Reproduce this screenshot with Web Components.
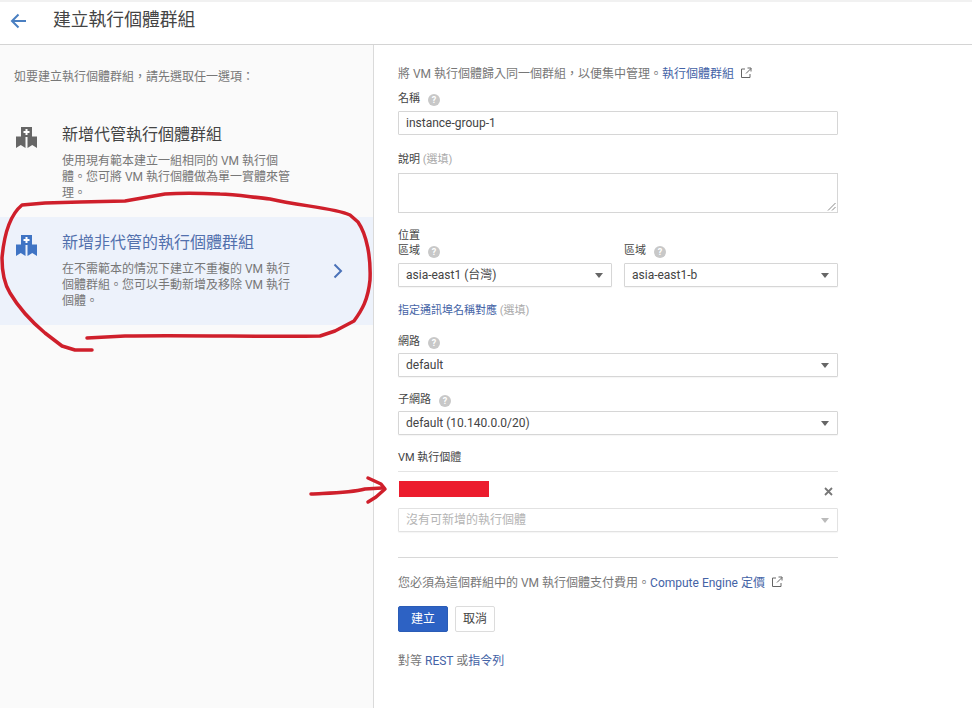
<!DOCTYPE html>
<html lang="zh-TW"><head><meta charset="utf-8"><title>建立執行個體群組</title>
<style>
html,body{margin:0;height:100%;background:#fff;overflow:hidden}
body{font:12px/16px Roboto,"Noto Sans CJK TC",sans-serif;color:#666}
</style></head><body>
<ig-page>
  <ig-header slot="header">建立執行個體群組</ig-header>
  <div slot="left" style="padding:24px 14px 24px;color:#777">如要建立執行個體群組，請先選取任一選項：</div>
  <ig-option slot="left" heading="新增代管執行個體群組">使用現有範本建立一組相同的 VM 執行個體。您可將 VM 執行個體做為單一實體來管理。</ig-option>
  <ig-option slot="left" heading="新增非代管的執行個體群組" selected>在不需範本的情況下建立不重複的 VM 執行個體群組。您可以手動新增及移除 VM 執行個體。</ig-option>
  <ig-form slot="right"></ig-form>
</ig-page>
<script>
const LINK='#4463a6';
const EXT=`<svg width="12" height="12" viewBox="0 0 12 12" fill="none" stroke="#666" stroke-width="1" style="margin-left:6px;vertical-align:-1px"><path d="M5 2H1.500v8.500H10V7"/><path d="M6 6.500 11 1.500M7.500 1H11v3.500"/></svg>`;
function def(name,html,init){
  customElements.define(name,class extends HTMLElement{
    constructor(){super();this.attachShadow({mode:'open'}).innerHTML=html}
    connectedCallback(){init&&init.call(this,this.shadowRoot)}
  });
}
def('ig-page',`<style>
:host{display:grid;grid-template-rows:45px 1fr;height:708px;width:972px}
.l{background:#fafafa;border-right:1px solid #dadada;display:flex;flex-direction:column;min-height:0}
.b{display:grid;grid-template-columns:374px 1fr;min-height:0}
.r{padding:0 134px 0 24px;min-width:0}
</style><slot name="header"></slot><div class="b"><div class="l"><slot name="left"></slot></div><div class="r"><slot name="right"></slot></div></div>`);
def('ig-header',`<style>
:host{display:flex;align-items:center;border-bottom:1px solid #d4d4d4;border-top:2px solid #f1f1f1;box-sizing:border-box;height:45px;background:#fff}
svg{margin-left:10px;flex:none}
.t{margin-left:27px;font-size:17.800px;color:#444;line-height:24px;position:relative;top:-3px}
</style><svg width="16" height="16" viewBox="0 0 16 16" style="position:relative;top:-2px" fill="none" stroke="#4a7fc1" stroke-width="2"><path d="M16 8H2M8.500 1.500 2 8l6.500 6.500"/></svg><div class="t"><slot></slot></div>`);
def('ig-option',`<style>
:host{display:block;box-sizing:border-box;height:108px;padding:15px 0 0 0;position:relative}
:host([selected]){background:#edf2fb}
.row{display:grid;grid-template-columns:62px 232px 1fr}
.i{padding:3px 0 0 16px}
.h{font-size:16px;line-height:24px;color:#444;margin-top:-1px;margin-bottom:6px;white-space:nowrap}
:host([selected]) .h{color:#5270ad}
.d{line-height:16px;color:#777}
.c{display:none;align-self:center;padding-left:39px;margin-top:4px}
:host([selected]) .c{display:block}
</style><div class="row"><div class="i"><svg width="21" height="21" viewBox="0 0 21 21"><path class="g" d="M5 0h11v9.500h5v11.500l-4.750-3-4.750 3V10h-2v11l-4.750-3L0 21V9.500h5z"/><path d="M9.500 2h2v2h2v2h-2v2h-2V6h-2V4h2z" fill="#fff"/></svg></div>
<div><div class="h"></div><div class="d"><slot></slot></div></div>
<div class="c"><svg width="10" height="16" viewBox="0 0 10 16" fill="none" stroke="#4a72b8" stroke-width="2"><path d="M1.500 1.500 8 8l-6.500 6.500"/></svg></div></div>`,function(s){
  s.querySelector('.h').textContent=this.getAttribute('heading');
  s.querySelector('.g').setAttribute('fill',this.hasAttribute('selected')?'#3f74c4':'#666');
});
def('ig-help',`<style>
:host{display:inline-flex;width:12px;height:12px;border-radius:50%;background:#c8c8c8;color:#fff;font:bold 9px/12px Roboto,sans-serif;justify-content:center;margin-left:8px;vertical-align:-1px}
</style>?`);
def('ig-label',`<style>
:host{display:block;line-height:16px;color:#444;font-size:11px}
</style><slot></slot>`);
def('ig-input',`<style>
:host{display:block;box-sizing:border-box;height:24px;border:1px solid #d6d6d6;padding:0 7px;line-height:22px;font-size:12px;color:#444;background:#fff;border-radius:1px}
</style><slot></slot>`);
def('ig-textarea',`<style>
:host{display:block;box-sizing:border-box;height:40px;border:1px solid #d6d6d6;background:#fff;position:relative}
svg{position:absolute;right:1px;bottom:1px}
</style><svg width="9" height="9" viewBox="0 0 9 9" fill="none" stroke="#888"><path d="M1 8.500 8.500 1M5 8.500 8.500 5"/></svg>`);
def('ig-select',`<style>
:host{display:flex;align-items:center;justify-content:space-between;box-sizing:border-box;height:24px;border:1px solid #d6d6d6;padding:0 8px 0 7px;line-height:22px;font-size:12px;color:#444;background:#fff;border-radius:1px;box-shadow:0 1px 1px rgba(0,0,0,.04)}
:host([disabled]){color:#b5b5b5;border-color:#e2e2e2}
i{width:0;height:0;border:4.500px solid transparent;border-top:5px solid #666;border-bottom:0}
:host([disabled]) i{border-top-color:#bbb}
</style><span><slot></slot></span><i></i>`);
def('ig-button',`<style>
:host{display:inline-flex;align-items:center;justify-content:center;box-sizing:border-box;height:26px;border-radius:2px;font-size:12px;border:1px solid #dcdcdc;background:#fff;color:#444}
:host([primary]){background:#2d62c4;color:#fff;border-color:#2a5cb6}
</style><slot></slot>`);
def('ig-form',`<style>
:host{display:block;color:#777;position:relative}
a{color:${LINK};text-decoration:none}
.o{color:#aaa}
.two{display:grid;grid-template-columns:214px 214px;gap:12px}
.two>div{min-width:0}
.rowline{height:1px;background:#e4e4e4;margin-top:5px}
.vm{display:flex;justify-content:space-between;align-items:center;height:36px;padding:0 5px 0 1px}
.red{width:90px;height:16px;background:#ec1c2e;margin-top:-3px}
.x{width:9px;height:9px;margin-top:2px}
hr{border:0;height:1px;background:#d8d8d8;margin:25px 0 0}
.btns{display:flex;gap:7px;margin-top:15px}
</style>
<div style="margin-top:21px">將 VM 執行個體歸入同一個群組，以便集中管理。<a>執行個體群組</a>${EXT}</div>
<ig-label style="margin-top:9px">名稱<ig-help></ig-help></ig-label>
<ig-input style="margin-top:4px">instance-group-1</ig-input>
<ig-label style="margin-top:17px">說明 <span class="o">(選填)</span></ig-label>
<ig-textarea style="margin-top:5px"></ig-textarea>
<ig-label style="margin-top:15px;line-height:15px">位置</ig-label>
<div class="two"><div><ig-label>區域<ig-help></ig-help></ig-label><ig-select style="margin-top:4px">asia-east1 (台灣)</ig-select></div>
<div><ig-label>區域<ig-help></ig-help></ig-label><ig-select style="margin-top:4px">asia-east1-b</ig-select></div></div>
<div style="margin-top:16px;font-size:11px"><a>指定通訊埠名稱對應</a> <span class="o">(選填)</span></div>
<ig-label style="margin-top:15px">網路<ig-help></ig-help></ig-label>
<ig-select style="margin-top:3px">default</ig-select>
<ig-label style="margin-top:15px">子網路<ig-help></ig-help></ig-label>
<ig-select style="margin-top:3px">default (10.140.0.0/20)</ig-select>
<ig-label style="margin-top:15px">VM 執行個體</ig-label>
<div class="rowline"></div>
<div class="vm"><div class="red"></div><svg class="x" viewBox="0 0 9 9" stroke="#777" stroke-width="1.800"><path d="M1 1l7 7M8 1 1 8"/></svg></div>
<ig-select disabled>沒有可新增的執行個體</ig-select>
<hr>
<div style="margin-top:17px">您必須為這個群組中的 VM 執行個體支付費用。<a>Compute Engine 定價</a>${EXT}</div>
<div class="btns"><ig-button primary style="width:50px">建立</ig-button><ig-button style="width:40px">取消</ig-button></div>
<div style="margin-top:21px">對等 <a>REST</a> 或<a>指令列</a></div>`);
def('ig-ink',`<style>
:host{position:absolute;left:0;top:0;pointer-events:none;display:block}
</style><svg width="972" height="708" viewBox="0 0 972 708" fill="none" stroke="#cf1f2b" stroke-width="3.500" stroke-linecap="round" stroke-linejoin="round">
<path d="M87 338 125 336C190 335 270 337 320 336L335 331 354 321C362 310 368 300 370 280 371 258 367 235 358 222L350 215C335 208 300 206 270 199 250 197 235 194 220 194 195 193 180 193 165 194L125 201 80 202 45 203 22 205C10 215 4 235 2 258 2 275 5 285 10 293 20 310 32 322 45 333L62 346 75 350 92 350"/>
<path d="M311 494C330 493 350 493 365 489L382 488"/><path d="M368 478 381 484 385 489 376 497 368 502"/></svg>`);
document.body.appendChild(document.createElement('ig-ink'));
</script>
</body></html>
